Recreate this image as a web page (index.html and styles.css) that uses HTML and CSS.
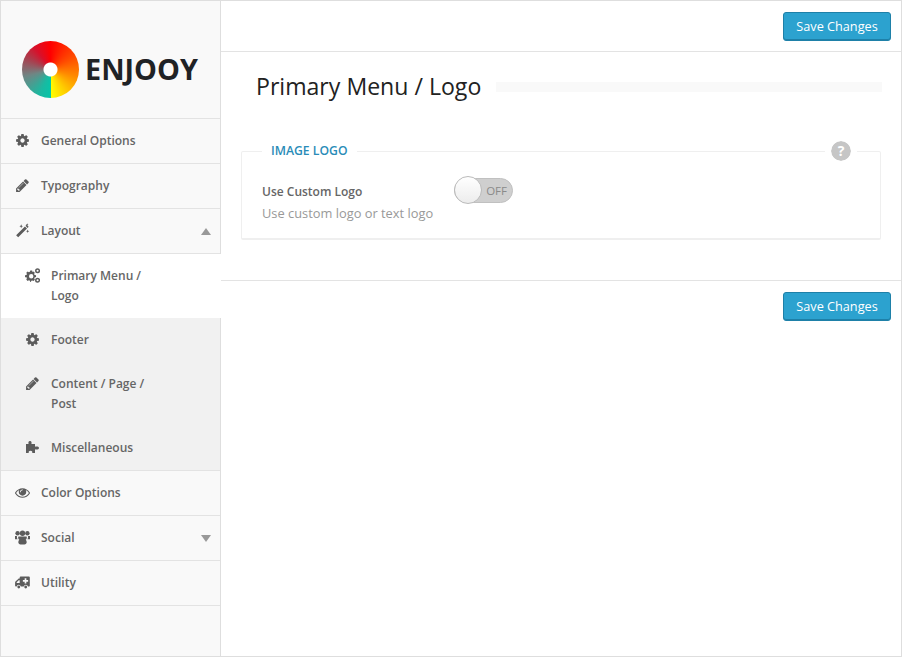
FILE: index.html
```html
<!DOCTYPE html>
<html lang="en">
<head>
<meta charset="utf-8">
<title>Primary Menu / Logo</title>
<link rel="stylesheet" href="styles.css">
</head>
<body>
<svg class="defs" width="0" height="0" aria-hidden="true">
  <symbol id="i-cog" viewBox="0 0 1792 1792"><path d="M1152 896q0-106-75-181t-181-75-181 75-75 181 75 181 181 75 181-75 75-181zm512-109v222q0 12-8 23t-20 13l-185 28q-19 54-39 91 35 50 107 138 10 12 10 25t-9 23q-27 37-99 108t-94 71q-12 0-26-9l-138-108q-44 23-91 38-16 136-29 186-7 28-36 28h-222q-14 0-24.5-8.5t-11.5-21.5l-28-184q-49-16-90-37l-141 107q-10 9-25 9-14 0-25-11-126-114-165-168-7-10-7-23 0-12 8-23 15-21 51-66.5t54-70.5q-27-50-41-99l-183-27q-13-2-21-12.5t-8-23.5v-222q0-12 8-23t19-13l186-28q14-46 39-92-40-57-107-138-10-12-10-24 0-10 9-23 26-36 98.5-107.5t94.5-71.5q13 0 26 10l138 107q44-23 91-38 16-136 29-186 7-28 36-28h222q14 0 24.5 8.5t11.5 21.5l28 184q49 16 90 37l142-107q9-9 24-9 13 0 25 10 129 119 165 170 7 8 7 22 0 12-8 23-15 21-51 66.5t-54 70.5q26 50 41 98l183 28q13 2 21 12.5t8 23.5z"/></symbol>
  <symbol id="i-pencil" viewBox="0 0 1792 1792"><path d="M491 1536l91-91-235-235-91 91v107h128v128h107zm523-928q0-22-22-22-10 0-17 7l-542 542q-7 7-7 17 0 22 22 22 10 0 17-7l542-542q7-7 7-17zm-54-192l416 416-832 832h-416v-416zm683 96q0 53-37 90l-166 166-416-416 166-165q36-38 90-38 53 0 91 38l235 234q37 39 37 91z"/></symbol>
  <symbol id="i-eye" viewBox="0 0 1792 1792"><path d="M1664 960q-152-236-381-353 61 104 61 225 0 185-131.5 316.5t-316.5 131.5-316.5-131.5-131.5-316.5q0-121 61-225-229 117-381 353 133 205 333.5 326.5t434.5 121.5 434.5-121.5 333.5-326.5zm-720-384q0-20-14-34t-34-14q-125 0-214.5 89.5t-89.5 214.5q0 20 14 34t34 14 34-14 14-34q0-86 61-147t147-61q20 0 34-14t14-34zm848 384q0 34-20 69-140 230-376.5 368.5t-499.5 138.5-499.5-139-376.5-368q-20-35-20-69t20-69q140-229 376.5-368t499.5-139 499.5 139 376.5 368q20 35 20 69z"/></symbol>
  <symbol id="i-magic" viewBox="0 0 16 16"><path d="M1.200 13 10.600 3.600l2.200 2.200L3.400 15.200zM11.200 3l1.200-1.200 2.200 2.200-1.200 1.200z"/><path d="M6.600 1.400 7.200 3l1.300.5-1.300.6-.6 1.400L6 4.100 4.700 3.500 6 3zM13.500 7l.5 1.300 1.200.5-1.200.5-.5 1.300-.5-1.300-1.200-.5 1.200-.5zM13 .3l.4 1 1 .4-1 .4-.4 1-.4-1-1-.4 1-.4z"/></symbol>
  <symbol id="i-cogs" viewBox="0 0 16 16"><path transform="translate(-.2 -.9) scale(1.120)" fill-rule="evenodd" d="M5.200 3.200h1.800l.3 1.400 1-.4 1.200 1.200-.6 1.200.4.800 1.400.2v1.800l-1.400.4-.3.9.6 1.200-1.300 1.300-1.200-.6-.9.3-.4 1.300H5.200l-.3-1.300-1-.4-1.200.6-1.300-1.300.6-1.200-.4-.9L.2 9.600V7.800l1.400-.3.4-.9-.6-1.200 1.300-1.200 1.200.6.900-.4zM6.100 6.600a2.100 2.100 0 1 0 0 4.200 2.100 2.100 0 0 0 0-4.200z"/><circle class="ring" cx="13.400" cy="3" r="1.900"/><circle class="ring" cx="13.400" cy="13" r="1.900"/></symbol>
  <symbol id="i-puzzle" viewBox="0 0 15 15"><path d="M1 4H3.600C3.200 3 3.200 1 5 1S6.800 3 6.400 4H10V6.800C11 6.200 14 6.400 14 8S11 9.800 10 9.200V13H7.200C7.500 12 7.400 10.800 5.500 10.800S3.500 12 3.800 13H1Z"/></symbol>
  <symbol id="i-group" viewBox="0 0 15 14"><circle cx="2.600" cy="2.800" r="2.200"/><circle cx="12.400" cy="2.800" r="2.200"/><circle cx="7.500" cy="2.700" r="2.700"/><path d="M0 5.600h2c-.2 1-.1 2.200.6 3.200H0zM13 5.600h2v3.200h-2.600c.7-1 .8-2.200.6-3.200zM3.400 6h8.200c.6 1.300.1 2.600-.9 3.300.6.600 1 1.500 1 2.500 0 1.200-1 2.100-2.200 2.100H5.500c-1.200 0-2.200-.9-2.200-2.100 0-1 .4-1.900 1-2.500-1-.7-1.500-2-.9-3.300z"/></symbol>
  <symbol id="i-ambulance" viewBox="0 0 16 14"><path fill-rule="evenodd" d="M6 .6h8.800c.6 0 1 .4 1 1v8.900c0 .5-.3.800-.8.800h-1.200a2.300 2.300 0 0 0-4.500 0H6.200a2.300 2.300 0 0 0-4.500 0H1c-.5 0-.9-.4-.9-.9V6.900c0-.4.100-.7.400-1l2.900-2.700c.3-.3.600-.4 1-.4H5V1.600c0-.6.400-1 1-1zM10.300 2.400v1.900H8.400v1.800h1.900V8h1.800V6.100H14V4.300h-1.900V2.400zM4 4.600 1.800 6.800V7.400H5V4.600z"/><circle cx="4" cy="11.800" r="1.500"/><circle cx="11.400" cy="11.800" r="1.500"/></symbol>
</svg>
<div class="app">
  <aside class="sidebar">
    <div class="brand">
      <span class="mark"></span>
      <span class="brand-name">ENJOOY</span>
    </div>
    <nav>
      <a class="item"><svg class="ico"><use href="#i-cog"/></svg><span>General Options</span></a>
      <a class="item"><svg class="ico"><use href="#i-pencil"/></svg><span>Typography</span></a>
      <a class="item open"><svg class="ico"><use href="#i-magic"/></svg><span>Layout</span><i class="caret up"></i></a>
      <div class="sub">
        <a class="sub-item active"><svg class="ico"><use href="#i-cogs"/></svg><span>Primary Menu /<br>Logo</span></a>
        <a class="sub-item"><svg class="ico"><use href="#i-cog"/></svg><span>Footer</span></a>
        <a class="sub-item"><svg class="ico"><use href="#i-pencil"/></svg><span>Content / Page /<br>Post</span></a>
        <a class="sub-item"><svg class="ico"><use href="#i-puzzle"/></svg><span>Miscellaneous</span></a>
      </div>
      <a class="item after-sub"><svg class="ico"><use href="#i-eye"/></svg><span>Color Options</span></a>
      <a class="item"><svg class="ico"><use href="#i-group"/></svg><span>Social</span><i class="caret down"></i></a>
      <a class="item"><svg class="ico"><use href="#i-ambulance"/></svg><span>Utility</span></a>
    </nav>
  </aside>
  <main class="main">
    <div class="bar top"><button class="btn">Save Changes</button></div>
    <div class="heading">
      <h1>Primary Menu / Logo</h1>
      <span class="rule"></span>
    </div>
    <fieldset class="panel">
      <legend>IMAGE LOGO</legend>
      <span class="help">?</span>
      <div class="row">
        <div class="labels">
          <div class="label">Use Custom Logo</div>
          <div class="desc">Use custom logo or text logo</div>
        </div>
        <div class="switch"><span class="knob"></span><span class="off">OFF</span></div>
      </div>
    </fieldset>
    <div class="bar bottom"><button class="btn">Save Changes</button></div>
  </main>
</div>
</body>
</html>
```
FILE: styles.css
```css
* { box-sizing: border-box; }
html, body { margin: 0; padding: 0; background: #fff; }
body { font-family: "Open Sans", "Liberation Sans", sans-serif; color: #555; height: 658px; overflow: hidden; }
.defs { display: block; height: 0; }
.app { display: flex; width: 902px; height: 657px; border: 1px solid #dedede; }
.sidebar { width: 220px; flex: none; background: #f9f9f9; border-right: 1px solid #dedede; }
.brand { height: 118px; padding: 40px 0 0 21px; display: flex; align-items: flex-start; gap: 6px; border-bottom: 1px solid #e3e3e3; }
.mark {
  width: 57px; height: 57px; border-radius: 50%; flex: none;
  background:
    radial-gradient(circle at center, #fff 0 6.5px, transparent 7.5px),
    conic-gradient(from 0deg, #ff0000 0deg, #ff4a00 60deg, #ff8a00 105deg, #ffcc00 145deg, #ffff00 180deg, #08c4a8 180deg, #1cb8a0 205deg, #6f8684 255deg, #a8404f 295deg, #d8102a 325deg, #ff0000 360deg);
}
.brand-name { font-size: 28.8px; font-weight: 700; color: #1f2225; line-height: 55px; }
.item, .sub-item { display: flex; font-size: 12px; font-weight: 600; color: #666; line-height: 20px; }
.item { height: 45px; align-items: center; padding: 0 0 2px 14px; border-bottom: 1px solid #e3e3e3; position: relative; }
.item span { padding-top: 2px; }
.ico { width: 15px; height: 15px; fill: #5c5c5c; flex: none; margin-right: 11px; }
.ring { fill: none; stroke: #5c5c5c; stroke-width: 1.6; }
.caret { position: absolute; right: 9px; top: 19px; width: 0; height: 0; border-left: 5.5px solid transparent; border-right: 5.5px solid transparent; }
.caret.up { border-bottom: 7px solid #999; }
.caret.down { border-top: 7px solid #999; }
.sub { background: #f1f1f1; border-bottom: 1px solid #e3e3e3; }
.sub-item { padding: 12px 0 12px 24px; align-items: flex-start; }
.sub-item .ico { margin-top: 2px; }
.sub-item.active { background: #fff; margin-right: -1px; position: relative; }
.main { flex: 1; min-width: 0; background: #fff; }
.bar { display: flex; justify-content: flex-end; padding: 11px 10px 0 0; }
.bar.top { height: 51px; border-bottom: 1px solid #e3e3e3; }
.bar.bottom { border-top: 1px solid #e3e3e3; margin-top: 40px; }
.btn { width: 108px; height: 29px; padding: 0 0 1px; font: 400 12.7px "Open Sans", sans-serif; color: #fff; background: #2ca2cf; border: 1px solid #1e80a8; border-radius: 3px; box-shadow: inset 0 -1px 0 #1e80a8; }
.heading { display: flex; align-items: center; gap: 15px; padding: 15px 19px 0 35px; height: 54px; }
h1 { margin: 0 0 2px; font-size: 23.1px; font-weight: 400; color: #222; line-height: 34px; white-space: nowrap; }
.rule { flex: 1; height: 10px; background: #f9f9f9; }
.panel { position: relative; margin: 36px 20px 0; padding: 18px 20px 0; height: 98px; border: 1px solid #efefef; border-bottom-width: 2px; border-radius: 2px; min-width: 0; }
legend { margin-left: 0; padding: 0 10px 0 9px; font-size: 12.2px; font-weight: 600; color: #2a8cb8; line-height: 18px; }
.help { position: absolute; right: 29px; top: -19px; width: 20px; height: 20px; border-radius: 50%; background: #c6c6c6; outline: 6px solid #fff; color: #fff; font-size: 14px; font-weight: 700; line-height: 20px; text-align: center; }
.row { display: flex; align-items: flex-start; }
.labels { width: 192px; }
.label { font-size: 12px; font-weight: 600; color: #666; line-height: 18px; margin-top: 5px; }
.desc { font-size: 12.85px; color: #999; line-height: 20px; margin-top: 2px; }
.switch { position: relative; width: 59px; height: 25px; background: #cfcfcf; border: 1px solid #c0c0c0; border-radius: 13px; }
.knob { position: absolute; left: -1px; top: -3px; width: 28px; height: 28px; border-radius: 50%; background: linear-gradient(#fff, #ececec); border: 1px solid #bbb; }
.off { position: absolute; right: 5px; top: 0; font-size: 11.5px; font-weight: 500; color: #8a8a8a; line-height: 23px; }
```
